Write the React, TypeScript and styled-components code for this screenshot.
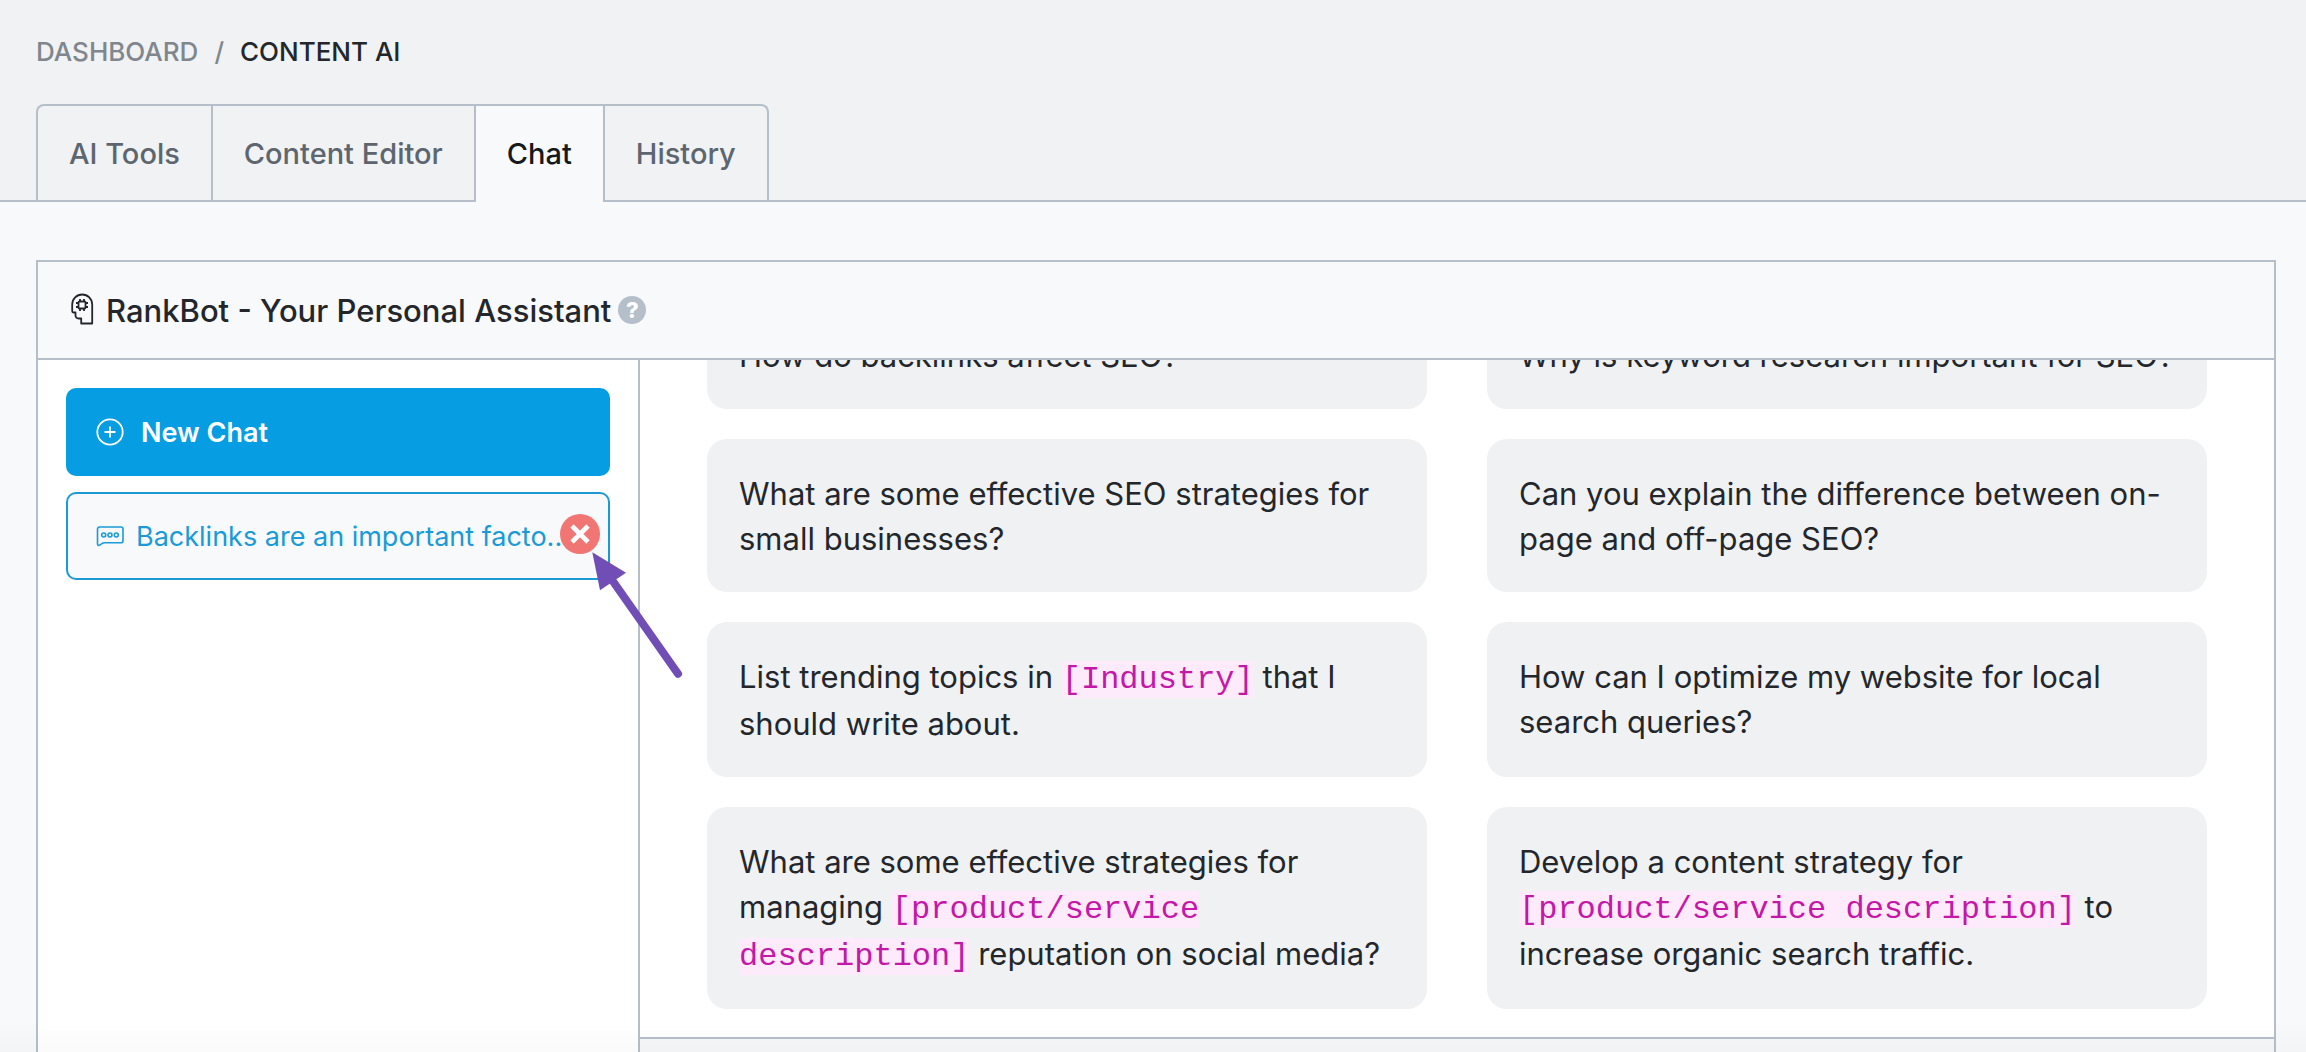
import React from 'react';
import styled, { createGlobalStyle } from 'styled-components';

const Global = createGlobalStyle`
  * { box-sizing: border-box; }
  body {
    margin: 0;
    background: #f8f9fb;
    color: #23272b;
    font-family: Inter, "Liberation Sans", sans-serif;
    overflow: hidden;
  }
  button { cursor: pointer; }
`;

const Page = styled.div`
  position: relative;
  display: flex;
  flex-direction: column;
  height: 100vh;
  &::after {
    content: '';
    position: absolute;
    left: 0;
    right: 0;
    bottom: 0;
    height: 32px;
    background: linear-gradient(rgba(0, 0, 0, 0), rgba(0, 0, 0, 0.02));
    pointer-events: none;
  }
`;

const TopBar = styled.header`
  background: #f0f2f4;
  border-bottom: 2px solid #b5bfc9;
  padding: 32px 36px 0;
`;

const Crumbs = styled.nav`
  display: flex;
  gap: 16px;
  margin-bottom: 32px;
  color: #7f868d;
  font-size: 26px;
  font-weight: 500;
  line-height: 40px;
`;

const CrumbLink = styled.a`
  color: inherit;
  text-decoration: none;
`;

const CrumbCurrent = styled.span`
  color: #23272b;
`;

const Tabs = styled.div`
  display: inline-flex;
  border: 2px solid #b5bfc9;
  border-bottom: 0;
  border-radius: 8px 8px 0 0;
  vertical-align: bottom;
`;

const Tab = styled.button<{ $active?: boolean }>`
  height: ${(p) => (p.$active ? 96 : 94)}px;
  margin-bottom: ${(p) => (p.$active ? -2 : 0)}px;
  padding: ${(p) => (p.$active ? '0 31px 2px' : '0 31px')};
  border: 0;
  border-right: 2px solid #b5bfc9;
  background: ${(p) => (p.$active ? '#f8f9fb' : 'transparent')};
  color: ${(p) => (p.$active ? '#16191c' : '#5d666f')};
  font: 500 29px Inter, "Liberation Sans", sans-serif;
  &:last-child { border-right: 0; }
`;

const Panel = styled.main`
  flex: 1;
  min-height: 0;
  display: flex;
  flex-direction: column;
  margin: 58px 30px 0 36px;
  border: 2px solid #b5bfc9;
  border-bottom: 0;
`;

const PanelHead = styled.div`
  display: flex;
  align-items: center;
  height: 98px;
  padding: 0 32px;
  border-bottom: 2px solid #b5bfc9;
`;

const Title = styled.h1`
  margin: 0 7px 0 12px;
  font-size: 31px;
  font-weight: 500;
`;

const HelpButton = styled.button`
  width: 28px;
  height: 28px;
  padding: 0;
  border: 0;
  border-radius: 50%;
  background: #b5bfc9;
  color: #fff;
  font: 800 22px/28px Inter, "Liberation Sans", sans-serif;
  text-align: center;
`;

const Body = styled.div`
  flex: 1;
  min-height: 0;
  display: flex;
  background: #fff;
`;

const Sidebar = styled.aside`
  width: 602px;
  flex: none;
  display: flex;
  flex-direction: column;
  gap: 16px;
  padding: 28px;
  border-right: 2px solid #b5bfc9;
`;

const NewChat = styled.button`
  display: flex;
  align-items: center;
  gap: 17px;
  height: 88px;
  padding: 0 30px;
  border: 0;
  border-radius: 10px;
  background: #069de3;
  color: #fff;
  font: 600 27px Inter, "Liberation Sans", sans-serif;
`;

const ChatItem = styled.div`
  position: relative;
  display: flex;
  height: 88px;
  border: 2px solid #1a9ad7;
  border-radius: 10px;
  background: #f8f9fb;
`;

const ChatOpen = styled.button`
  flex: 1;
  min-width: 0;
  display: flex;
  align-items: center;
  gap: 12px;
  padding: 0 28px;
  border: 0;
  background: none;
  color: #1a9ad7;
  font: 400 27px Inter, "Liberation Sans", sans-serif;
  white-space: nowrap;
`;

const DeleteButton = styled.button`
  position: absolute;
  top: 20px;
  right: 8px;
  display: flex;
  padding: 0;
  border: 0;
  background: none;
`;

const Pointer = styled.svg`
  position: absolute;
  left: 520px;
  top: 54px;
  z-index: 2;
  pointer-events: none;
`;

const Content = styled.section`
  flex: 1;
  min-width: 0;
  display: flex;
  flex-direction: column;
`;

const Scroller = styled.div`
  flex: 1;
  min-height: 0;
  display: flex;
  flex-direction: column;
  justify-content: flex-end;
  overflow: hidden;
  padding: 0 67px 28px;
`;

const Grid = styled.div`
  display: grid;
  grid-template-columns: 1fr 1fr;
  gap: 30px 60px;
`;

const Card = styled.button`
  padding: 32px 32px 31px;
  border: 0;
  border-radius: 20px;
  background: #f0f1f3;
  color: #23272b;
  font: 400 31px/45px Inter, "Liberation Sans", sans-serif;
  text-align: left;
`;

const CardText = styled.span`
  display: block;
  height: 100%;
`;

const Slot = styled.code`
  background: #fdeafb;
  color: #c318a8;
  font: 400 32px/43px "Liberation Mono", monospace;
`;

const Footer = styled.footer`
  height: 15px;
  flex: none;
  border-top: 2px solid #b5bfc9;
  background: #f6f7f9;
`;

const HeadIcon = () => (
  <svg width="24" height="36" viewBox="0 0 24 36" fill="none" stroke="#23272b" strokeWidth="1.8" strokeLinejoin="round" aria-hidden="true">
    <path d="M2.200 19V12.500a10 10 0 0 1 20 0V31.500H11.200V26.500H8.500a3 3 0 0 1-3-3V20.500H3.400q-1.200 0-1.200-1.500z" />
    <rect x="8.500" y="9.500" width="7" height="7" rx="1" />
    <path d="M10 7v2.500M14 7v2.500M10 16.500V19M14 16.500V19M6 11h2.500M6 15h2.500M15.500 11H18M15.500 15H18" />
  </svg>
);

const PlusIcon = () => (
  <svg width="28" height="28" viewBox="0 0 28 28" fill="none" stroke="#fff" strokeWidth="1.8" aria-hidden="true">
    <circle cx="14" cy="14" r="12.700" />
    <path d="M14 8.500v11M8.500 14h11" />
  </svg>
);

const BubbleIcon = () => (
  <svg width="28" height="22" viewBox="0 0 28 22" fill="none" stroke="#1a9ad7" strokeWidth="1.600" strokeLinejoin="round" aria-hidden="true">
    <path d="M1.500 18.800V4a2 2 0 0 1 2-2h21.500a2 2 0 0 1 2 2v11.700a2 2 0 0 1-2 2H9q-2 0-3.500 1.200l-1.800 1.200q-2.200 1-2.200-1.300z" />
    <circle cx="7.700" cy="10" r="2" />
    <circle cx="14" cy="10" r="2" />
    <circle cx="20.300" cy="10" r="2" />
  </svg>
);

const CloseIcon = () => (
  <svg width="40" height="40" viewBox="0 0 40 40" aria-hidden="true">
    <circle cx="20" cy="20" r="20" fill="#f07573" />
    <path d="M12 12l16 16M28 12L12 28" stroke="#fff" strokeWidth="4.600" />
  </svg>
);

const prompts: React.ReactNode[] = [
  'How do backlinks affect SEO?',
  'Why is keyword research important for SEO?',
  'What are some effective SEO strategies for small businesses?',
  'Can you explain the difference between on-page and off-page SEO?',
  <>List trending topics in <Slot>[Industry]</Slot> that I should write about.</>,
  'How can I optimize my website for local search queries?',
  <>What are some effective strategies for managing <Slot>[product/service description]</Slot> reputation on social media?</>,
  <>Develop a content strategy for <Slot>[product/service description]</Slot> to increase organic search traffic.</>,
];

export default function App() {
  return (
    <Page>
      <Global />
      <TopBar>
        <Crumbs aria-label="Breadcrumb">
          <CrumbLink href="#">DASHBOARD</CrumbLink>
          <span>/</span>
          <CrumbCurrent>CONTENT AI</CrumbCurrent>
        </Crumbs>
        <Tabs>
          <Tab>AI Tools</Tab>
          <Tab>Content Editor</Tab>
          <Tab $active>Chat</Tab>
          <Tab>History</Tab>
        </Tabs>
      </TopBar>
      <Panel>
        <PanelHead>
          <HeadIcon />
          <Title>RankBot - Your Personal Assistant</Title>
          <HelpButton aria-label="Help">?</HelpButton>
        </PanelHead>
        <Body>
          <Sidebar>
            <NewChat>
              <PlusIcon />
              New Chat
            </NewChat>
            <ChatItem>
              <ChatOpen>
                <BubbleIcon />
                Backlinks are an important facto...
              </ChatOpen>
              <DeleteButton aria-label="Delete chat">
                <CloseIcon />
              </DeleteButton>
              <Pointer width="100" height="136" viewBox="0 0 100 136" aria-hidden="true">
                <path d="M25.300 33.700L90 125.700" stroke="#714eb5" strokeWidth="8" strokeLinecap="round" />
                <path d="M4.300 4.300L38 24.700L12 42.300z" fill="#714eb5" />
              </Pointer>
            </ChatItem>
          </Sidebar>
          <Content>
            <Scroller>
              <Grid>
                {prompts.map((prompt, i) => (
                  <Card key={i}>
                    <CardText>{prompt}</CardText>
                  </Card>
                ))}
              </Grid>
            </Scroller>
            <Footer />
          </Content>
        </Body>
      </Panel>
    </Page>
  );
}
